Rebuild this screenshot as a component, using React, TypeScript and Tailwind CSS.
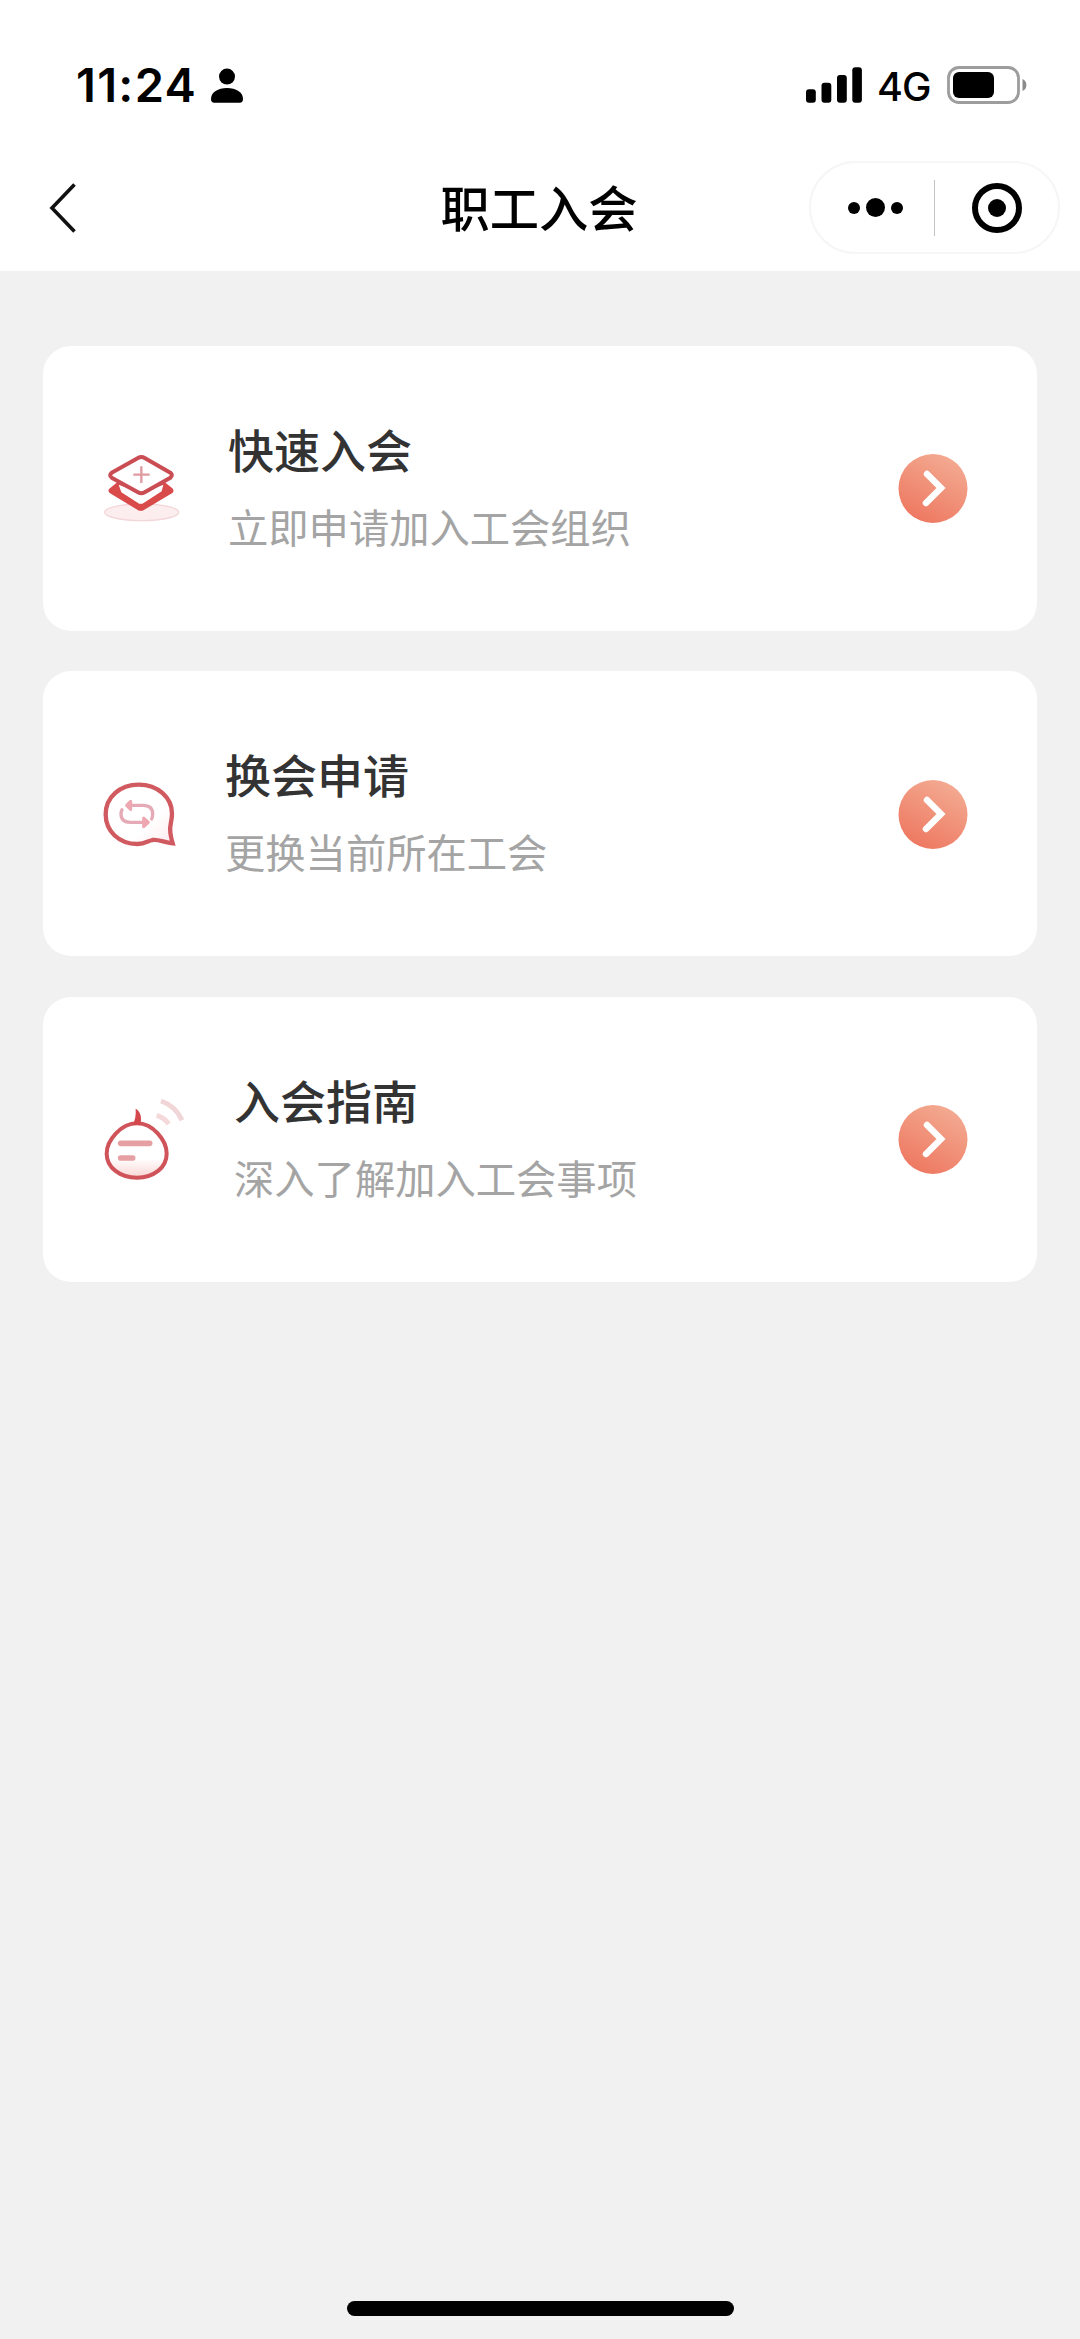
import type { ReactNode } from "react";

const CJK = "font-['Noto_Sans_CJK_SC',sans-serif]";

function StatusBar() {
  return (
    <div className="flex h-[144px] items-center justify-between bg-white pt-[26px] pr-[53px] pl-[76px] text-black">
      <div className="flex items-center">
        <span className="w-[135px] font-[Inter,sans-serif] text-[47px] leading-[48px] font-semibold tracking-[1.3px] whitespace-nowrap">
          11:24
        </span>
        <svg viewBox="0 0 32 35" className="h-[35px] w-[32px]" fill="#000">
          <circle cx="16" cy="8.6" r="8" />
          <path d="M0 31C0 24 7 20 16 20s16 4 16 11c0 2.600-1.200 3.700-3.200 3.700H3.200C1.200 34.700 0 33.600 0 31z" />
        </svg>
      </div>
      <div className="flex items-center">
        <svg viewBox="0 0 56 36" className="h-[36px] w-[56px]" fill="#000">
          <rect x="0" y="22.300" width="9.800" height="13.400" rx="3" />
          <rect x="15.500" y="15.700" width="9.800" height="20" rx="3" />
          <rect x="31" y="8" width="9.800" height="27.700" rx="3" />
          <rect x="46.300" y="0.300" width="9.600" height="35.400" rx="3" />
        </svg>
        <span className="ml-[15px] w-[55px] pt-[3px] font-[Inter,sans-serif] text-[39.500px] leading-[40px] font-medium tracking-[-0.8px] whitespace-nowrap">
          4G
        </span>
        <svg viewBox="0 0 80 38" className="ml-[15px] h-[38px] w-[80px]">
          <rect x="1.500" y="1.500" width="70" height="35" rx="10.500" fill="#fff" stroke="#9d9d9d" strokeWidth="2.800" />
          <rect x="6" y="6" width="41" height="26" rx="6" fill="#000" />
          <path d="M75.500 13c2.400 1 3.900 3.300 3.900 6s-1.500 5-3.900 6z" fill="#8a8a8a" />
        </svg>
      </div>
    </div>
  );
}

function NavBar() {
  return (
    <div className="grid h-[127px] grid-cols-[1fr_auto_1fr] items-center bg-white px-[20px]">
      <svg viewBox="0 0 28 50" className="ml-[29px] h-[50px] w-[28px]" fill="none" stroke="#111" strokeWidth="3.600">
        <path d="M25.500 1.500 3 25l22.500 23.500" />
      </svg>
      <h1 className={`${CJK} pr-[2px] pb-[3px] text-[49.300px] leading-[60px] font-medium text-black`}>职工入会</h1>
      <div className="flex h-[93px] w-[251px] items-center justify-self-end rounded-full border-2 border-[#f6f6f6]">
        <div className="flex w-[123px] items-center justify-center gap-[6px] pl-[6px]">
          <i className="size-[12px] rounded-full bg-black" />
          <i className="size-[19px] rounded-full bg-black" />
          <i className="size-[12px] rounded-full bg-black" />
        </div>
        <div className="h-[56px] w-px bg-[#c4c4c4]" />
        <div className="flex flex-1 items-center justify-center pl-[1px]">
          <div className="flex size-[50px] items-center justify-center rounded-full border-6 border-black">
            <i className="size-[18px] rounded-full bg-black" />
          </div>
        </div>
      </div>
    </div>
  );
}

function LayersIcon() {
  return (
    <svg viewBox="0 -6 360 360" className="size-[120px] shrink-0" fill="none">
      <ellipse cx="185" cy="247" rx="111" ry="25" fill="#fceeee" stroke="#f3d6d9" strokeWidth="4" />
      <path
        d="M110 158 88 176Q82 182 89 189L172 239Q182 246 193 239L277 189Q284 182 277 175L256 158Z"
        fill="#d94a4b"
      />
      <path d="M116 164 184 190 250 164 245 184 192 218Q182 225 173 218L124 187Z" fill="#fff" />
      <path
        d="M174 84Q184 78 194 84L271 128Q280 135 271 143L194 187Q184 193 174 187L95 143Q86 136 95 128Z"
        fill="#fff"
        stroke="#cb4d54"
        strokeWidth="12"
        strokeLinejoin="round"
      />
      <path d="M184 109v50M160 134h49" stroke="#e09aa0" strokeWidth="7" />
    </svg>
  );
}

function SwapIcon() {
  return (
    <svg viewBox="0 -19 360 360" className="size-[120px] shrink-0" fill="none">
      <defs>
        <linearGradient id="bubble" x1="0" y1="0" x2="1" y2="1">
          <stop offset="0.650" stopColor="#fff" />
          <stop offset="1" stopColor="#fdeaec" />
        </linearGradient>
      </defs>
      <path
        d="M176 73C234 73 276 112 276 160C276 186 267 197 271 217Q273 232 278 249C252 246 234 236 217 239C203 242 196 251 172 251C117 251 77 213 77 162C77 111 119 73 176 73Z"
        fill="url(#bubble)"
        stroke="#d05a60"
        strokeWidth="13"
      />
      <g stroke="#e5aab5" strokeWidth="10" strokeLinecap="round" strokeLinejoin="round">
        <path d="M144 135h45q29 0 29 26 0 9-3 15" />
        <path d="M126 148q-3 7-3 13 0 25 29 25h50" />
        <path d="M152 123 140 135l12 12v-24z" fill="#eea6b0" stroke="#eea6b0" strokeWidth="9" />
        <path d="M191 173l14 13-14 13z" fill="#eea6b0" stroke="#eea6b0" strokeWidth="9" />
      </g>
    </svg>
  );
}

function GuideIcon() {
  return (
    <svg viewBox="0 -3 360 360" className="size-[120px] shrink-0" fill="none">
      <defs>
        <linearGradient id="belly" x1="0" y1="0" x2="0" y2="1">
          <stop offset="0.650" stopColor="#fff" />
          <stop offset="1" stopColor="#f9d5d3" />
        </linearGradient>
      </defs>
      <path
        d="M171 130C218 130 260 180 260 221C260 263 221 293 171 293C120 293 80 263 80 221C80 180 124 130 171 130Z"
        fill="url(#belly)"
        stroke="#d0535a"
        strokeWidth="12"
      />
      <path d="M158 134C166 120 168 104 167 86C181 93 187 112 181 134Z" fill="#d4484c" />
      <path d="M122 190h87M122 234h36" stroke="#e6a0a3" strokeWidth="17" strokeLinecap="round" />
      <path d="M230 106Q252 112 266 132" stroke="#f4d8da" strokeWidth="15" />
      <path d="M243 63Q287 78 306 121" stroke="#f1d6d8" strokeWidth="15" />
    </svg>
  );
}

function ArrowButton() {
  return (
    <svg viewBox="0 0 70 70" className="mr-[69px] ml-auto size-[70px] shrink-0">
      <defs>
        <linearGradient id="coral" x1="0.750" y1="0.050" x2="0.250" y2="1">
          <stop offset="0" stopColor="#f3aa91" />
          <stop offset="1" stopColor="#ee765f" />
        </linearGradient>
      </defs>
      <circle cx="35" cy="35.500" r="34.500" fill="url(#coral)" />
      <path
        d="M29 21 43 35 28 50"
        fill="none"
        stroke="#fff"
        strokeWidth="6.500"
        strokeLinecap="round"
        strokeLinejoin="miter"
      />
    </svg>
  );
}

function Card({ icon, title, text, offset }: { icon: ReactNode; title: string; text: string; offset: string }) {
  return (
    <div className="flex h-[285px] items-center rounded-[28px] bg-white pl-[37px]">
      {icon}
      <div className={`${CJK} ${offset} flex flex-col gap-[18px] pb-[3px] whitespace-nowrap`}>
        <h2 className="text-[46px] leading-[60px] font-medium text-[#333]">{title}</h2>
        <p className="text-[40.300px] leading-[60px] font-normal text-[#a4a4a4]">{text}</p>
      </div>
      <ArrowButton />
    </div>
  );
}

export default function App() {
  return (
    <div className="flex h-[2339px] w-[1080px] flex-col overflow-hidden bg-[#f1f1f1]">
      <StatusBar />
      <NavBar />
      <main className="flex flex-1 flex-col gap-[40.700px] px-[43px] pt-[74.600px]">
        <Card icon={<LayersIcon />} title="快速入会" text="立即申请加入工会组织" offset="ml-[28px]" />
        <Card icon={<SwapIcon />} title="换会申请" text="更换当前所在工会" offset="ml-[25px]" />
        <Card icon={<GuideIcon />} title="入会指南" text="深入了解加入工会事项" offset="ml-[34px]" />
      </main>
      <div className="mb-[23px] ml-[347px] h-[15px] w-[387px] rounded-full bg-black" />
    </div>
  );
}
